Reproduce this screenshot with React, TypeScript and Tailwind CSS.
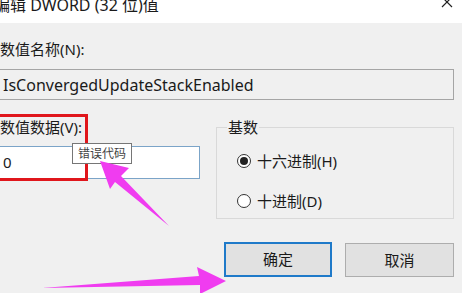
export default function App() {
  return (
    <div
      className="relative w-[462px] h-[293px] overflow-hidden bg-[#f0f0f0] text-[#1a1a1a]"
      style={{ fontFamily: '"Noto Sans", "Noto Sans CJK SC", sans-serif' }}
    >
      {/* title bar */}
      <div className="h-[23px] bg-white flex justify-between">
        <span className="-ml-[6px] -mt-[4px] text-[16px] leading-[18px] whitespace-nowrap">
          编辑 DWORD (32 位)值
        </span>
        <svg width="12" height="12" viewBox="0 0 12 12" className="-mt-[4px] mr-[9px]">
          <path d="M1 1 L11 11 M11 1 L1 11" stroke="#222" strokeWidth="1.2" />
        </svg>
      </div>

      <div className="pt-[18px] pr-[8px]">
        <div className="text-[15px] leading-[17px] h-[17px] whitespace-nowrap">数值名称(N):</div>
        <div className="mt-[11px] -ml-[2px] h-[31px] border border-[#a5a5a5] bg-[#f0f0f0] flex items-center pl-[4px] text-[16px] whitespace-nowrap">
          IsConvergedUpdateStackEnabled
        </div>

        <div className="mt-[19px] flex items-start">
          <div className="w-[200px] flex flex-col">
            <div className="text-[15px] leading-[17px] h-[17px] whitespace-nowrap">数值数据(V):</div>
            <div className="mt-[10px] -ml-[2px] h-[33px] border border-[#7ba4c8] bg-white flex items-center pl-[4px] text-[15px]">
              0
            </div>
          </div>

          <fieldset className="ml-[16px] w-[238px] h-[100px] border border-[#d9d9d9] pl-[10px] pr-0 pb-[8px]">
            <legend className="px-[1px] text-[15px] leading-[17px]">基数</legend>
            <div className="pl-[10px] pt-[15px] flex flex-col gap-[20px] text-[15px]">
              <label className="flex items-center h-[20px] gap-[6px] whitespace-nowrap">
                <span className="w-[14px] h-[14px] rounded-full border border-[#333] bg-white flex items-center justify-center">
                  <span className="w-[8px] h-[8px] rounded-full bg-[#222]" />
                </span>
                十六进制(H)
              </label>
              <label className="flex items-center h-[20px] gap-[6px] whitespace-nowrap">
                <span className="w-[14px] h-[14px] rounded-full border border-[#333] bg-white" />
                十进制(D)
              </label>
            </div>
          </fieldset>
        </div>

        <div className="mt-[23px] flex justify-end gap-[13px]">
          <button className="w-[108px] h-[35px] border-2 border-[#1f7ac9] bg-[#e1e1e1] text-[15px]">
            确定
          </button>
          <button className="w-[109px] h-[34px] mt-[1px] border border-[#adadad] bg-[#e1e1e1] text-[15px]">
            取消
          </button>
        </div>
      </div>

      {/* red highlight */}
      <div className="absolute -left-[3px] top-[114px] w-[91px] h-[67px] border-[3px] border-[#e0161c]" />

      {/* tooltip */}
      <div className="absolute left-[72px] top-[143px] w-[60px] h-[21px] border border-[#767676] bg-white text-[12px] leading-[19px] text-center text-[#444]">
        错误代码
      </div>

      {/* arrows */}
      <svg className="absolute inset-0 pointer-events-none" width="462" height="293">
        <polygon
          points="100,161 129,168 121,176 169,226 115,182 110,189"
          fill="#f03cf0"
        />
        <polygon
          points="226,281 197,267 199,276 42,288 200,285 200,294"
          fill="#f03cf0"
        />
      </svg>
    </div>
  );
}
